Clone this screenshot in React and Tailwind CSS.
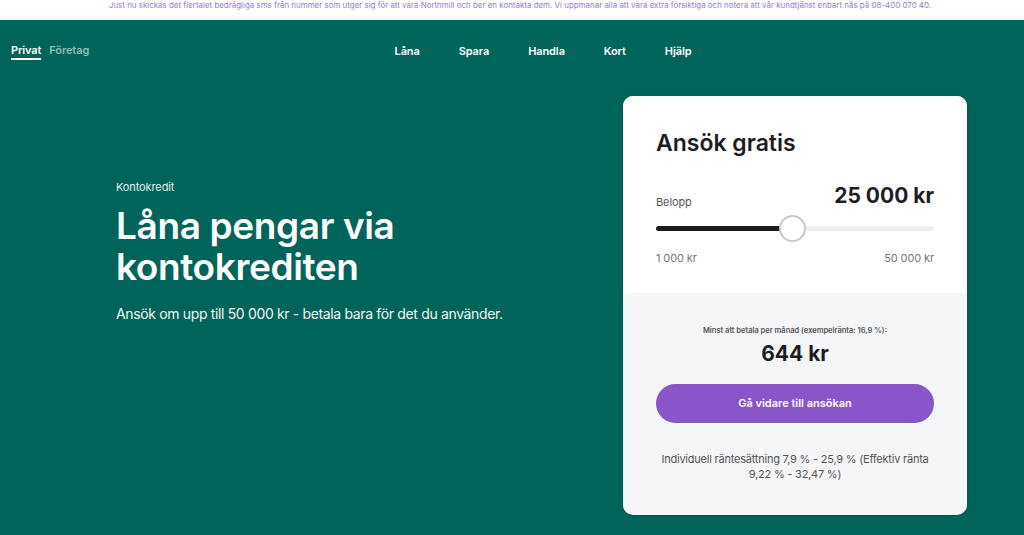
import { useState } from "react";

const navItems = ["Låna", "Spara", "Handla", "Kort", "Hjälp"];

function AmountSlider({ value, min, max }) {
  const pct = ((value - min) / (max - min)) * 100;
  return (
    <div className="relative h-[26px] flex items-center">
      <div className="h-[5px] w-full rounded-full bg-[#eeeff1]" />
      <div
        className="absolute left-0 h-[5px] rounded-full bg-[#1d1d1f]"
        style={{ width: `${pct}%` }}
      />
      <div
        className="absolute w-[27px] h-[27px] -ml-[13px] rounded-full bg-white border-2 border-[#c9c9c9]"
        style={{ left: `${pct}%` }}
      />
    </div>
  );
}

export default function App() {
  const [amount] = useState(25000);

  return (
    <div className="w-[1024px] h-[535px] overflow-hidden font-[Inter,'Liberation_Sans',sans-serif] bg-[#00645a]">
      {/* Warning banner */}
      <div className="h-[20px] bg-white flex items-start justify-center">
        <p className="text-[7.95px] leading-[10px] text-[#9a7cc9] pl-[16px]">
          Just nu skickas det flertalet bedrägliga sms från nummer som utger sig för att vara Northmill och ber en kontakta dem. Vi uppmanar alla att vara extra försiktiga och notera att vår kundtjänst enbart nås på 08-400 070 40.
        </p>
      </div>

      {/* Top navigation */}
      <header className="relative h-[62px] flex items-center justify-center">
        <div className="absolute left-[11px] top-[23px] flex gap-[8px] text-[11px] font-semibold tracking-[-0.01em]">
          <span className="text-white border-b-2 border-white pb-[1px] leading-[14px]">Privat</span>
          <span className="text-[#8fbfb6] leading-[14px]">Företag</span>
        </div>
        <nav className="flex gap-[39px] text-[11px] font-semibold text-white ml-[62px] tracking-[-0.01em]">
          {navItems.map((item) => (
            <span key={item}>{item}</span>
          ))}
        </nav>
      </header>

      <main className="flex pl-[116px] pr-[57px]">
        {/* Hero copy */}
        <section className="flex-1 pt-[97px] text-white">
          <p className="text-[11px] text-[#e3efec] tracking-[-0.01em]">Kontokredit</p>
          <h1 className="mt-[9px] text-[37px] leading-[41px] font-semibold tracking-[-0.01em]">
            Låna pengar via
            <br />
            kontokrediten
          </h1>
          <p className="mt-[16px] text-[14px] text-[#f1f7f5] tracking-[-0.025em]">
            Ansök om upp till 50 000 kr - betala bara för det du använder.
          </p>
        </section>

        {/* Application card */}
        <aside className="w-[344px] mt-[14px] rounded-[10px] overflow-hidden bg-[#f5f6f8] shadow-sm">
          <div className="bg-white px-[33px] pt-[32px] pb-[26px]">
            <h2 className="text-[23px] font-semibold text-[#1d1d1f] leading-[30px]">Ansök gratis</h2>
            <div className="mt-[25px] flex items-end justify-between">
              <span className="text-[11px] text-[#555] mb-[-1px] tracking-[-0.01em]">Belopp</span>
              <span className="text-[21px] font-bold text-[#1d1d1f] leading-[26px]">25 000 kr</span>
            </div>
            <div className="mt-[6px]">
              <AmountSlider value={amount} min={1000} max={50000} />
            </div>
            <div className="mt-[9px] flex justify-between text-[11px] text-[#777] tracking-[-0.01em]">
              <span>1 000 kr</span>
              <span>50 000 kr</span>
            </div>
          </div>

          <div className="px-[33px] pt-[32px] pb-[33px] flex flex-col items-center">
            <p className="text-[7.5px] font-semibold text-[#555]">
              Minst att betala per månad (exempelränta: 16,9 %):
            </p>
            <p className="mt-[5px] text-[21px] font-bold text-[#1d1d1f] leading-[26px]">644 kr</p>
            <button className="mt-[17px] w-full h-[39px] rounded-full bg-[#8a55c8] text-white text-[11px] font-semibold">
              Gå vidare till ansökan
            </button>
            <p className="mt-[29px] -mx-[12px] text-[11px] leading-[15px] text-[#555] text-center whitespace-nowrap tracking-[-0.02em]">
              Individuell räntesättning 7,9 % - 25,9 % (Effektiv ränta
              <br />
              9,22 % - 32,47 %)
            </p>
          </div>
        </aside>
      </main>
    </div>
  );
}
